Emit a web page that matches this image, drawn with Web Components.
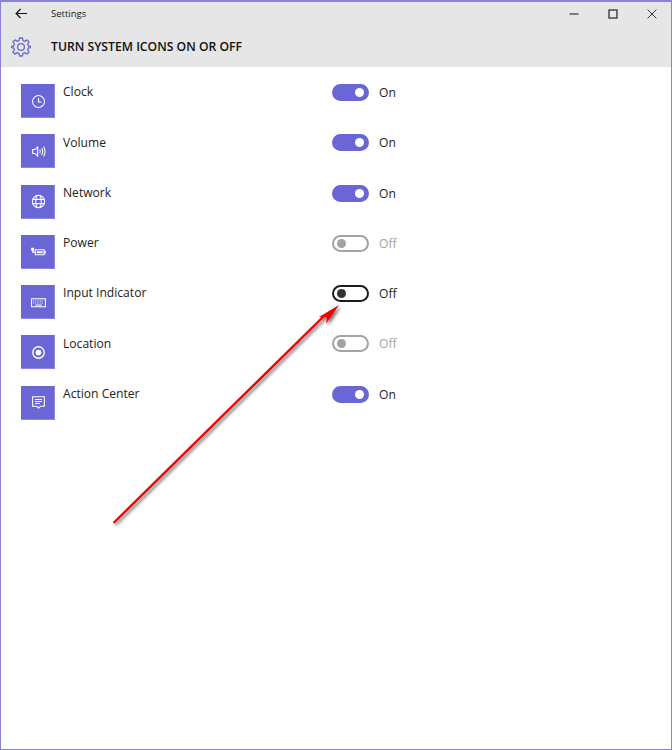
<!DOCTYPE html>
<html>
<head>
<meta charset="utf-8">
<title>Settings</title>
<style>
  html, body { margin: 0; height: 100%; background: #fff; }
  body { font-family: "Open Sans", "Noto Sans", sans-serif; color: #111; }
</style>
</head>
<body>
<settings-window>
  <span slot="caption">Settings</span>
  <span slot="heading">TURN SYSTEM ICONS ON OR OFF</span>

  <icon-row name="Clock" state="on">
    <svg viewBox="0 0 16 16"><circle cx="8" cy="8" r="5.6"/><path d="M8 4.8V8.4H10.6"/></svg>
  </icon-row>
  <icon-row name="Volume" state="on">
    <svg viewBox="0 0 16 16"><path d="M2.5 6.2H4.6L7.2 3.8V12.2L4.6 9.8H2.5Z"/><path d="M9.2 6.2Q10.2 8 9.2 9.8"/><path d="M11 4.6Q12.9 8 11 11.4"/><path d="M12.8 3.2Q15.4 8 12.8 12.8"/></svg>
  </icon-row>
  <icon-row name="Network" state="on">
    <svg viewBox="0 0 16 16"><circle cx="8" cy="8" r="5.8"/><ellipse cx="8" cy="8" rx="2.6" ry="5.8"/><path d="M2.4 6H13.6M2.4 10H13.6"/></svg>
  </icon-row>
  <icon-row name="Power" state="disabled">
    <svg viewBox="0 0 16 16"><path d="M5 6.4H13.2V11H5Z"/><path d="M6.4 7.8H11.8V9.6H6.4Z" fill="#fff" stroke="none"/><path d="M13.2 7.8H14.4V9.6H13.2"/><path d="M1.6 5H3.4V6.8H1.6Z" fill="#fff"/><path d="M2.5 6.8V8.6H5"/></svg>
  </icon-row>
  <icon-row name="Input Indicator" state="off">
    <svg viewBox="0 0 16 16"><rect x="1.5" y="4.5" width="13" height="7.5"/><path stroke-dasharray="1 1" d="M3 6.6H13M3 8.4H13"/><path d="M5 10.4H11"/></svg>
  </icon-row>
  <icon-row name="Location" state="disabled">
    <svg viewBox="0 0 16 16"><circle cx="8" cy="8" r="5.4" stroke-width="1.3"/><circle cx="8" cy="8" r="2.7" fill="#fff" stroke="none"/></svg>
  </icon-row>
  <icon-row name="Action Center" state="on">
    <svg viewBox="0 0 16 16"><path d="M2.5 2.5H13.5V11.5H9.6L8 13.4L6.4 11.5H2.5Z"/><path d="M4.8 5.2H11.2M4.8 7H11.2M4.8 8.9H9.4"/></svg>
  </icon-row>

  <red-arrow slot="overlay"></red-arrow>
</settings-window>

<script>
// ventana de ajustes: barra gris con título y lista de filas por slot
class SettingsWindow extends HTMLElement {
  constructor() {
    super();
    this.attachShadow({ mode: "open" });
    this.shadowRoot.innerHTML = `
      <style>
        :host { display: block; position: relative; box-sizing: border-box; height: 750px;
                border: 1px solid #8583dc; border-top-width: 2px; background: #fff; overflow: hidden; }
        .bar { background: #e6e6e6; height: 65px; display: flex; flex-direction: column; }
        .top { display: flex; align-items: center; height: 24px; }
        .back { width: 40px; padding: 0 0 2px 14px; box-sizing: border-box; display: flex; }
        .caption { margin-left: 10px; flex: 1; font-size: 9.5px; color: #222; position: relative; top: -1px; }
        .btns { display: flex; }
        .btns div { width: 39px; height: 24px; display: flex; align-items: center; justify-content: center; }
        .head { display: flex; align-items: center; height: 35px; margin-top: 3px; }
        .gear { width: 20px; height: 20px; margin-left: 10px; }
        .heading { margin-left: 20px; font-size: 12.2px; font-weight: 600; color: #111; }
        .list { padding-top: 17px; }
        svg { display: block; fill: none; }
      </style>
      <div class="bar">
        <div class="top">
          <div class="back">
            <svg width="13" height="11" viewBox="0 0 13 11" stroke="#111" stroke-width="1.2"><path d="M12 5.5H1.2M5.6 1L1.1 5.5L5.6 10"/></svg>
          </div>
          <div class="caption"><slot name="caption"></slot></div>
          <div class="btns">
            <div><svg width="10" height="10" viewBox="0 0 10 10" stroke="#333" stroke-width="1.2"><path d="M0.5 5H9.5"/></svg></div>
            <div><svg width="10" height="10" viewBox="0 0 10 10" stroke="#222" stroke-width="1.2"><rect x="1" y="1" width="8" height="8"/></svg></div>
            <div><svg width="10" height="10" viewBox="0 0 10 10" stroke="#333"><path d="M0.6 0.6L9.4 9.4M9.4 0.6L0.6 9.4"/></svg></div>
          </div>
        </div>
        <div class="head">
          <svg class="gear" viewBox="0 0 20 20" stroke="#6a66d6" stroke-width="1.3" stroke-linejoin="round">
            <path d="M8.5 1H11.5L12 3.6L13.8 4.4L16 2.9L18.1 5L16.6 7.2L17.4 9L20 9.5V10.5L17.4 11L16.6 12.8L18.1 15L16 17.1L13.8 15.6L12 16.4L11.5 19H8.5L8 16.4L6.2 15.6L4 17.1L1.9 15L3.4 12.8L2.6 11L0.4 10.5V9.5L2.6 9L3.4 7.2L1.9 5L4 2.9L6.2 4.4L8 3.6Z"/>
            <circle cx="10" cy="10" r="3.4"/>
          </svg>
          <div class="heading"><slot name="heading"></slot></div>
        </div>
      </div>
      <div class="list"><slot></slot></div>
      <slot name="overlay"></slot>
    `;
  }
}

// fila: cuadro con icono, nombre e interruptor
class IconRow extends HTMLElement {
  constructor() {
    super();
    this.attachShadow({ mode: "open" });
    this.shadowRoot.innerHTML = `
      <style>
        :host { display: grid; grid-template-columns: 34px 277px auto; height: 50.25px;
                margin-left: 20px; align-items: start; }
        .tile { width: 34px; height: 34px; background: #6a66d6; box-shadow: inset 0 -1px #8b88e2, inset -1px 0 #8b88e2;
                display: flex; align-items: center; justify-content: center; }
        ::slotted(svg) { width: 17px; height: 17px; fill: none; stroke: #fff; stroke-width: 1; }
        .name { margin-left: 8px; font-size: 12.1px; line-height: 16px; color: #222; padding-top: .4px; }
      </style>
      <div class="tile"><slot></slot></div>
      <div class="name"></div>
      <toggle-switch></toggle-switch>
    `;
  }

  connectedCallback() {
    this.shadowRoot.querySelector(".name").textContent = this.getAttribute("name");
    this.shadowRoot.querySelector("toggle-switch").setAttribute("state", this.getAttribute("state"));
  }
}

class ToggleSwitch extends HTMLElement {
  static get observedAttributes() { return ["state"]; }

  constructor() {
    super();
    this.attachShadow({ mode: "open" });
    this.shadowRoot.innerHTML = `
      <style>
        :host { display: flex; align-items: center; gap: 10px; height: 17px; font-size: 12.1px; color: #222; }
        .track { box-sizing: border-box; width: 37px; height: 17px; border-radius: 9px; border: 2px solid #1c1c1c;
                 display: flex; align-items: center; padding: 0 3px; }
        .knob { width: 9px; height: 9px; border-radius: 50%; background: #333; }
        :host([state="on"]) .track { background: #6a66d6; border-color: #6a66d6; justify-content: flex-end; }
        :host([state="on"]) .knob { background: #fff; }
        :host([state="disabled"]) { color: #a3a3a3; }
        :host([state="disabled"]) .track { border-color: #a3a3a3; }
        :host([state="disabled"]) .knob { background: #a3a3a3; }
      </style>
      <div class="track"><div class="knob"></div></div>
      <span class="label"></span>
    `;
  }

  attributeChangedCallback() {
    this.shadowRoot.querySelector(".label").textContent =
      this.getAttribute("state") === "on" ? "On" : "Off";
  }
}

// flecha roja de la captura, va encima de todo
class RedArrow extends HTMLElement {
  constructor() {
    super();
    this.attachShadow({ mode: "open" });
    this.shadowRoot.innerHTML = `
      <style>
        :host { display: block; position: absolute; left: -1px; top: -2px; width: 672px; height: 750px; pointer-events: none; }
        svg { display: block; }
      </style>
      <svg width="672" height="750" viewBox="0 0 672 750">
        <defs><filter id="s" x="-10%" y="-10%" width="120%" height="120%"><feDropShadow dx="2" dy="2" stdDeviation="1.4" flood-color="#000" flood-opacity=".55"/></filter></defs>
        <g filter="url(#s)">
          <path d="M113.5 523L325 315" stroke="#f40000" stroke-width="2.4" fill="none"/>
          <path d="M339 305L319 317L327 317.5L326 324Z" fill="#f40000"/>
        </g>
      </svg>
    `;
  }
}

customElements.define("toggle-switch", ToggleSwitch);
customElements.define("icon-row", IconRow);
customElements.define("red-arrow", RedArrow);
customElements.define("settings-window", SettingsWindow);
</script>
</body>
</html>
